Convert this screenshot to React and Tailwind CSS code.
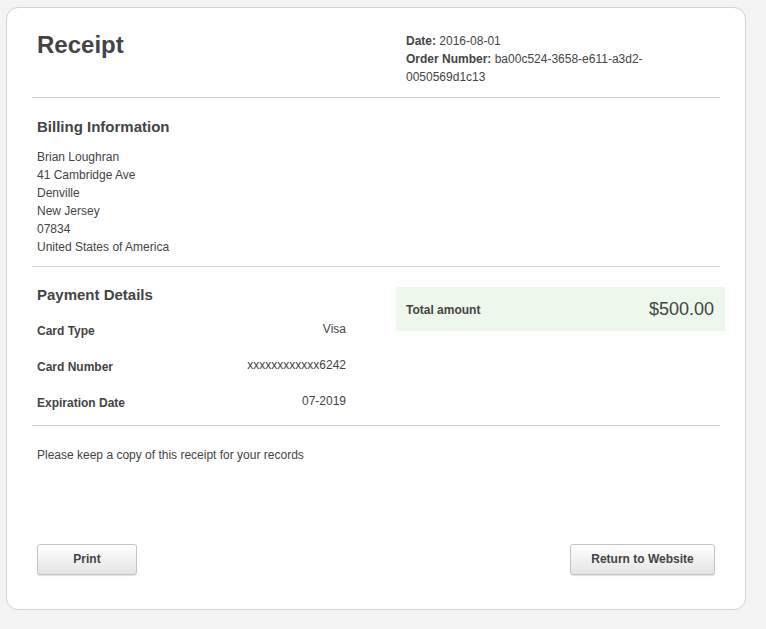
const billing = [
  'Brian Loughran',
  '41 Cambridge Ave',
  'Denville',
  'New Jersey',
  '07834',
  'United States of America',
]

const payment = [
  { label: 'Card Type', value: 'Visa' },
  { label: 'Card Number', value: 'xxxxxxxxxxxx6242' },
  { label: 'Expiration Date', value: '07-2019' },
]

function Button({ children, className = '' }) {
  return (
    <button
      className={`h-[31px] rounded-[3px] border border-[#c4c4c4] bg-gradient-to-b from-[#ffffff] to-[#e4e4e4] pb-[2px] text-[12px] font-bold text-[#444] shadow-[0_1px_1px_rgba(0,0,0,0.12)] ${className}`}
    >
      {children}
    </button>
  )
}

export default function App() {
  return (
    <div className="h-[629px] w-[766px] bg-[#f4f4f4] pl-[6px] pt-[7px] font-['Liberation_Sans',Arial,sans-serif] text-[12px] leading-[18px] text-[#444]">
      <div className="flex h-[603px] w-[740px] flex-col rounded-[12px] border border-[#d2d2d2] bg-white px-[25px]">
        {/* header */}
        <div className="grid grid-cols-2 border-b border-[#d2d2d2] pb-[11px] pt-[24px]">
          <h1 className="pl-[5px] text-[24px] font-bold leading-[26px]">Receipt</h1>
          <div className="pl-[30px] pr-[40px]">
            <div><span className="font-bold">Date:</span> 2016-08-01</div>
            <div><span className="font-bold">Order Number:</span> ba00c524-3658-e611-a3d2-0050569d1c13</div>
          </div>
        </div>

        {/* billing */}
        <div className="border-b border-[#d2d2d2] px-[5px] pb-[10px] pt-[19px]">
          <h2 className="mb-[11px] text-[15px] font-bold leading-[20px]">Billing Information</h2>
          {billing.map((line) => (
            <div key={line}>{line}</div>
          ))}
        </div>

        {/* payment */}
        <div className="grid grid-cols-2 border-b border-[#d2d2d2] pb-[13px]">
          <div className="pl-[5px] pr-[30px] pt-[18px]">
            <h2 className="mb-[15px] text-[15px] font-bold leading-[20px]">Payment Details</h2>
            <div className="flex flex-col gap-[16px]">
              {payment.map((row) => (
                <div key={row.label} className="flex h-[20px] items-start justify-between">
                  <span className="pt-[2px] font-bold">{row.label}</span>
                  <span>{row.value}</span>
                </div>
              ))}
            </div>
          </div>
          <div className="-mr-[5px] ml-[20px] pt-[20px]">
            <div className="flex h-[44px] items-center justify-between bg-[#edf7ec] pl-[10px] pr-[11px]">
              <span className="pt-[2px] font-bold">Total amount</span>
              <span className="text-[18px]">$500.00</span>
            </div>
          </div>
        </div>

        <p className="px-[5px] pt-[20px]">Please keep a copy of this receipt for your records</p>

        <div className="mt-auto flex justify-between px-[5px] pb-[34px]">
          <Button className="w-[100px]">Print</Button>
          <Button className="w-[145px]">Return to Website</Button>
        </div>
      </div>
    </div>
  )
}
